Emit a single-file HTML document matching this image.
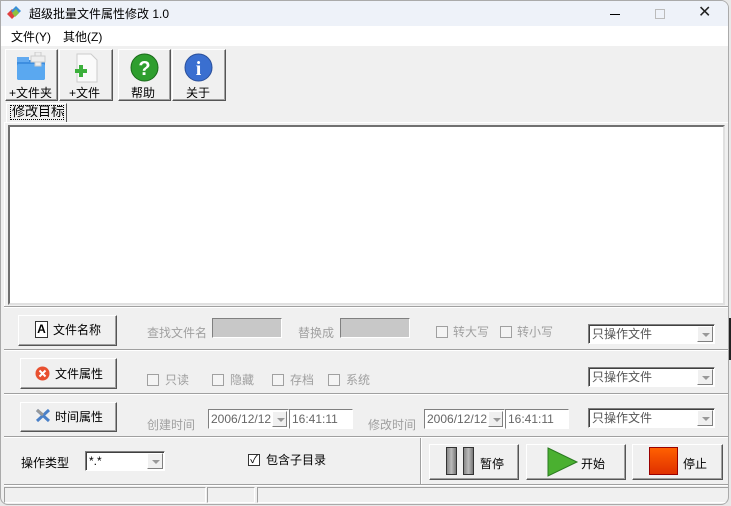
<!DOCTYPE html>
<html><head><meta charset="utf-8"><style>
*{box-sizing:border-box;margin:0;padding:0}
body{width:731px;height:506px;overflow:hidden;background:#e8e8e8;font-family:"Liberation Sans","Noto Sans CJK SC",sans-serif;font-size:12px;color:#000;position:relative}
.a{position:absolute;line-height:14px}
#win{left:0;top:0;width:729px;height:505px;background:#f0f0f0;border:1px solid #aaa;border-radius:0 8px 8px 8px;overflow:hidden}
.btn{position:absolute;background:#f0f0f0;border:1px solid;border-color:#fff #555 #555 #fff;box-shadow:inset -1px -1px 0 #a0a0a0}
.hl{position:absolute;height:2px;border-top:1px solid #a0a0a0;border-bottom:1px solid #fff}
.g{color:#a0a0a0}
.cb{position:absolute;width:12px;height:12px;border:1px solid #a0a0a0;background:#f4f4f4}
.sel{position:absolute;height:20px;width:127px;background:#fff;border:1px solid;border-color:#808080 #fff #fff #808080;box-shadow:inset 1px 1px 0 #404040;color:#555;padding:2px 3px;font-size:12px;line-height:15px}
.arr{position:absolute;right:1px;top:1px;width:16px;height:16px;background:#f0f0f0;border:1px solid;border-color:#fff #808080 #808080 #fff}
.arr:after{content:"";position:absolute;left:4px;top:6px;border:4px solid transparent;border-top:4px solid #999;border-bottom:0}
.dt{position:absolute;height:20px;background:#fff;border:1px solid;border-color:#808080 #fff #fff #808080;color:#666;font-size:12px;padding:2px 2px;line-height:14px}
</style></head><body>
<div id="win" class="a">
<div class="a" style="left:0;top:0;width:729px;height:25px;background:#eef2f9"></div>
<svg class="a" style="left:5px;top:5px" width="16" height="14" viewBox="0 0 16 14"><path d="M1 8 L6 3 L11 8 L6 13Z" fill="#e04040"/><path d="M5 5 L10 0 L15 5 L10 10Z" fill="#3a8fd8"/><path d="M6 7 L10 3 L13 7 L9 11Z" fill="#8fc040"/></svg>
<div class="a" style="left:28px;top:6px;font-size:12px">超级批量文件属性修改 1.0</div>
<div class="a" style="left:609px;top:13px;width:10px;height:1px;background:#000"></div>
<div class="a" style="left:654px;top:8px;width:10px;height:10px;border:1px solid #bbb"></div>
<div class="a" style="left:697px;top:5px;font-size:16px;color:#222">✕</div>
<div class="a" style="left:0;top:25px;width:729px;height:20px;background:#fff"></div>
<div class="a" style="left:10px;top:29px">文件(Y)</div>
<div class="a" style="left:62px;top:29px">其他(Z)</div>
<div class="btn" style="left:4px;top:48px;width:53px;height:52px"></div>
<div class="btn" style="left:58px;top:48px;width:54px;height:52px"></div>
<div class="btn" style="left:117px;top:48px;width:53px;height:52px"></div>
<div class="btn" style="left:171px;top:48px;width:54px;height:52px"></div>
<svg class="a" style="left:16px;top:51px" width="30" height="32"><rect x="0" y="8" width="28" height="20" rx="2" fill="#3d8ee0"/><rect x="0" y="5" width="12" height="5" fill="#62aaf0"/><rect x="0" y="12" width="28" height="16" rx="2" fill="#5aa8f0"/><rect x="18" y="0" width="6" height="14" fill="#eee" stroke="#ccc"/><rect x="14" y="4" width="14" height="6" fill="#eee" stroke="#ccc"/></svg>
<svg class="a" style="left:72px;top:52px" width="26" height="30"><path d="M4 1 H18 L24 7 V29 H4Z" fill="#fafafa" stroke="#ccc"/><rect x="2" y="16" width="12" height="4" fill="#3cb03c"/><rect x="6" y="12" width="4" height="12" fill="#3cb03c"/></svg>
<svg class="a" style="left:129px;top:52px" width="29" height="29"><circle cx="14.5" cy="14.5" r="13.5" fill="#2e9e2e" stroke="#1a6a1a"/><text x="14.5" y="22" font-size="20" font-weight="bold" fill="#fff" text-anchor="middle" font-family="Liberation Sans">?</text></svg>
<svg class="a" style="left:183px;top:52px" width="29" height="29"><circle cx="14.5" cy="14.5" r="13.5" fill="#3a6fd0" stroke="#2a4f9a"/><text x="14.5" y="22" font-size="20" font-weight="bold" fill="#fff" text-anchor="middle" font-family="Liberation Serif">i</text></svg>
<div class="a" style="left:8px;top:85px">+文件夹</div>
<div class="a" style="left:68px;top:85px">+文件</div>
<div class="a" style="left:130px;top:85px">帮助</div>
<div class="a" style="left:185px;top:85px">关于</div>
<div class="a" style="left:5px;top:102px;width:61px;height:20px;border:1px solid;border-color:#fff #555 #f0f0f0 #fff;background:#f0f0f0"></div>
<div class="a" style="left:9px;top:104px;width:54px;height:15px;border:1px dotted #000"></div>
<div class="a" style="left:11px;top:104px;font-size:13px">修改目标</div>
<div class="a" style="left:3px;top:121px;width:725px;height:185px;border:1px solid;border-color:#fff #808080 #808080 #fff"></div>
<div class="a" style="left:7px;top:124px;width:717px;height:180px;background:#fff;border:2px solid;border-color:#707070 #e0e0e0 #e0e0e0 #707070"></div>
<div class="hl" style="left:3px;top:305px;width:725px"></div>
<div class="hl" style="left:3px;top:348px;width:725px"></div>
<div class="hl" style="left:3px;top:392px;width:725px"></div>
<div class="hl" style="left:3px;top:435px;width:725px"></div>
<div class="hl" style="left:3px;top:483px;width:725px"></div>
<div class="a" style="left:419px;top:437px;width:2px;height:46px;border-left:1px solid #a0a0a0;border-right:1px solid #fff"></div>
<!-- row1 -->
<div class="btn" style="left:17px;top:314px;width:99px;height:31px"></div>
<div class="a" style="left:34px;top:320px;width:13px;height:17px;border:1px solid #333;background:#fff;font-weight:bold;font-size:12px;line-height:15px;text-align:center">A</div>
<div class="a" style="left:52px;top:322px">文件名称</div>
<div class="a g" style="left:146px;top:325px">查找文件名</div>
<div class="a" style="left:211px;top:317px;width:70px;height:20px;background:#c8c8c8;border:1px solid;border-color:#808080 #fff #fff #808080"></div>
<div class="a g" style="left:297px;top:325px">替换成</div>
<div class="a" style="left:339px;top:317px;width:70px;height:20px;background:#c8c8c8;border:1px solid;border-color:#808080 #fff #fff #808080"></div>
<div class="cb" style="left:435px;top:325px"></div><div class="a g" style="left:452px;top:324px">转大写</div>
<div class="cb" style="left:499px;top:325px"></div><div class="a g" style="left:516px;top:324px">转小写</div>
<div class="sel" style="left:587px;top:323px">只操作文件<div class="arr"></div></div>
<!-- row2 -->
<div class="btn" style="left:19px;top:357px;width:97px;height:31px"></div>
<svg class="a" style="left:34px;top:365px" width="15" height="15"><circle cx="7.5" cy="7.5" r="7" fill="#e85030"/><path d="M4.5 4.5 L10.5 10.5 M10.5 4.5 L4.5 10.5" stroke="#fff" stroke-width="2"/></svg>
<div class="a" style="left:54px;top:366px">文件属性</div>
<div class="cb" style="left:146px;top:373px"></div><div class="a g" style="left:164px;top:372px">只读</div>
<div class="cb" style="left:211px;top:373px"></div><div class="a g" style="left:229px;top:372px">隐藏</div>
<div class="cb" style="left:271px;top:373px"></div><div class="a g" style="left:289px;top:372px">存档</div>
<div class="cb" style="left:327px;top:373px"></div><div class="a g" style="left:345px;top:372px">系统</div>
<div class="sel" style="left:587px;top:366px">只操作文件<div class="arr"></div></div>
<!-- row3 -->
<div class="btn" style="left:19px;top:401px;width:97px;height:30px"></div>
<svg class="a" style="left:34px;top:407px" width="16" height="15"><path d="M2 2 L14 13 M14 2 L2 13" stroke="#4a80c8" stroke-width="3"/><path d="M2 2 L8 7" stroke="#999" stroke-width="3"/></svg>
<div class="a" style="left:54px;top:409px">时间属性</div>
<div class="a g" style="left:146px;top:417px">创建时间</div>
<div class="dt" style="left:207px;top:408px;width:81px">2006/12/12<div class="arr" style="width:15px"></div></div>
<div class="dt" style="left:288px;top:408px;width:64px">16:41:11</div>
<div class="a g" style="left:367px;top:417px">修改时间</div>
<div class="dt" style="left:423px;top:408px;width:81px">2006/12/12<div class="arr" style="width:15px"></div></div>
<div class="dt" style="left:504px;top:408px;width:64px">16:41:11</div>
<div class="sel" style="left:587px;top:407px">只操作文件<div class="arr"></div></div>
<!-- row4 -->
<div class="a" style="left:20px;top:455px">操作类型</div>
<div class="sel" style="left:84px;top:450px;width:80px;color:#000">*.*<div class="arr"></div></div>
<div class="a" style="left:247px;top:453px;width:12px;height:12px;border:1px solid #333;background:#fff;font-size:11px;line-height:10px;text-align:center">✓</div>
<div class="a" style="left:265px;top:452px">包含子目录</div>
<div class="btn" style="left:428px;top:443px;width:90px;height:36px"></div>
<div class="a" style="left:445px;top:446px;width:11px;height:28px;background:linear-gradient(90deg,#888,#bbb,#777);border:1px solid #333"></div>
<div class="a" style="left:462px;top:446px;width:11px;height:28px;background:linear-gradient(90deg,#888,#bbb,#777);border:1px solid #333"></div>
<div class="a" style="left:479px;top:456px">暂停</div>
<div class="btn" style="left:525px;top:443px;width:100px;height:36px"></div>
<svg class="a" style="left:546px;top:446px" width="32" height="30"><path d="M1 1 L30 15 L1 29Z" fill="#4ab030" stroke="#2a7a20"/></svg>
<div class="a" style="left:580px;top:456px">开始</div>
<div class="btn" style="left:631px;top:443px;width:91px;height:36px"></div>
<div class="a" style="left:648px;top:446px;width:29px;height:28px;background:linear-gradient(#ff6000,#e03000);border:1px solid #900"></div>
<div class="a" style="left:682px;top:456px">停止</div>
<div class="a" style="left:3px;top:486px;width:202px;height:16px;border:1px solid;border-color:#a0a0a0 #fff #fff #a0a0a0"></div>
<div class="a" style="left:206px;top:486px;width:48px;height:16px;border:1px solid;border-color:#a0a0a0 #fff #fff #a0a0a0"></div>
<div class="a" style="left:256px;top:486px;width:472px;height:16px;border:1px solid;border-color:#a0a0a0 #fff #fff #a0a0a0"></div>
</div>
<div class="a" style="left:729px;top:318px;width:2px;height:42px;background:#222"></div>
</body></html>
